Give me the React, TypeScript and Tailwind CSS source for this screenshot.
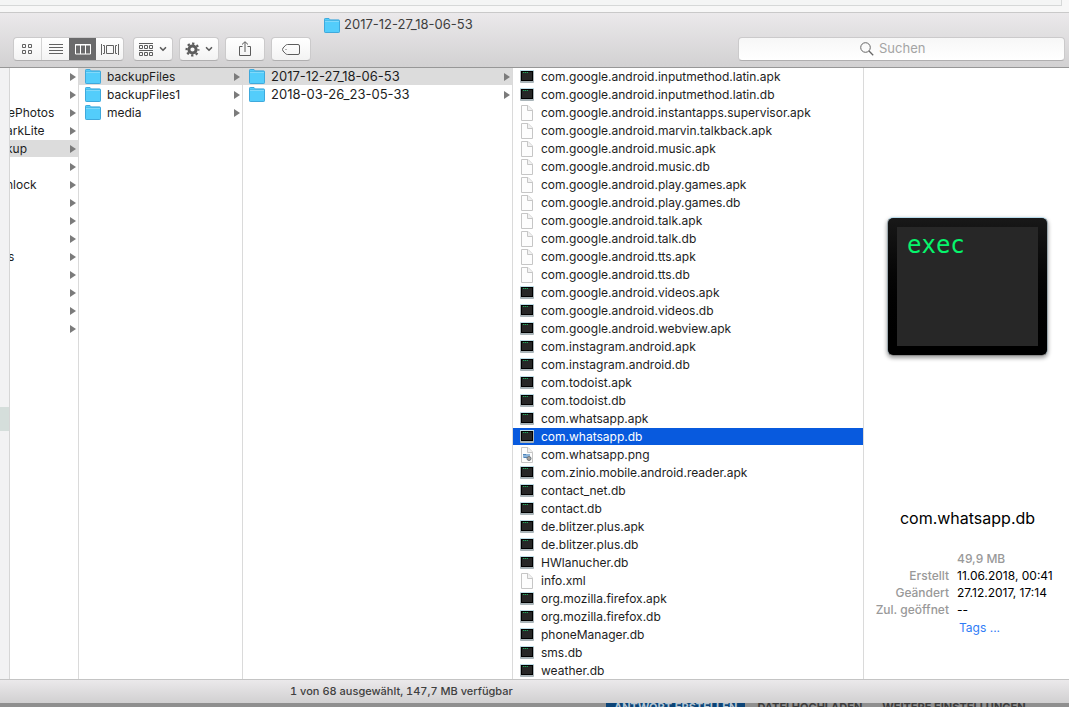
import React from 'react';
import clsx from 'clsx';
import { ChevronDown } from 'lucide-react';

type IconKind = 'exec' | 'doc' | 'image' | 'folder';

interface Item {
  name: string;
  icon?: IconKind;
  selected?: boolean;
  nameClass?: string;
}

const parents: Item[] = [
  { name: '' },
  { name: '' },
  { name: 'ePhotos', nameClass: '-ml-0.5' },
  { name: 'arkLite', nameClass: '-ml-1' },
  { name: 'kup', nameClass: '-ml-1', selected: true },
  { name: '' },
  { name: 'nlock', nameClass: '-ml-1' },
  { name: '' },
  { name: '' },
  { name: '' },
  { name: 's', nameClass: '-ml-0.5' },
  { name: '' },
  { name: '' },
  { name: '' },
  { name: '' }
];

const backups: Item[] = [
  { name: 'backupFiles', icon: 'folder', selected: true },
  { name: 'backupFiles1', icon: 'folder' },
  { name: 'media', icon: 'folder' }
];

const dates: Item[] = [
  { name: '2017-12-27_18-06-53', icon: 'folder', selected: true },
  { name: '2018-03-26_23-05-33', icon: 'folder' }
];

const files: Item[] = [
  { name: 'com.google.android.inputmethod.latin.apk', icon: 'exec' },
  { name: 'com.google.android.inputmethod.latin.db', icon: 'exec' },
  { name: 'com.google.android.instantapps.supervisor.apk', icon: 'doc' },
  { name: 'com.google.android.marvin.talkback.apk', icon: 'doc' },
  { name: 'com.google.android.music.apk', icon: 'doc' },
  { name: 'com.google.android.music.db', icon: 'doc' },
  { name: 'com.google.android.play.games.apk', icon: 'doc' },
  { name: 'com.google.android.play.games.db', icon: 'doc' },
  { name: 'com.google.android.talk.apk', icon: 'doc' },
  { name: 'com.google.android.talk.db', icon: 'doc' },
  { name: 'com.google.android.tts.apk', icon: 'doc' },
  { name: 'com.google.android.tts.db', icon: 'doc' },
  { name: 'com.google.android.videos.apk', icon: 'exec' },
  { name: 'com.google.android.videos.db', icon: 'exec' },
  { name: 'com.google.android.webview.apk', icon: 'exec' },
  { name: 'com.instagram.android.apk', icon: 'exec' },
  { name: 'com.instagram.android.db', icon: 'exec' },
  { name: 'com.todoist.apk', icon: 'exec' },
  { name: 'com.todoist.db', icon: 'exec' },
  { name: 'com.whatsapp.apk', icon: 'exec' },
  { name: 'com.whatsapp.db', icon: 'exec', selected: true },
  { name: 'com.whatsapp.png', icon: 'image' },
  { name: 'com.zinio.mobile.android.reader.apk', icon: 'exec' },
  { name: 'contact_net.db', icon: 'exec' },
  { name: 'contact.db', icon: 'exec' },
  { name: 'de.blitzer.plus.apk', icon: 'exec' },
  { name: 'de.blitzer.plus.db', icon: 'exec' },
  { name: 'HWlanucher.db', icon: 'exec' },
  { name: 'info.xml', icon: 'doc' },
  { name: 'org.mozilla.firefox.apk', icon: 'exec' },
  { name: 'org.mozilla.firefox.db', icon: 'exec' },
  { name: 'phoneManager.db', icon: 'exec' },
  { name: 'sms.db', icon: 'exec' },
  { name: 'weather.db', icon: 'exec' }
];

function FolderIcon() {
  return (
    <svg width="16" height="15" viewBox="0 0 16 15" className="shrink-0">
      <path d="M.5 2V1.2Q.5.5 1.2.5H5l1.3 1.4h8.5q.7 0 .7.7V13.800q0 .7-.7.7H1.200q-.7 0-.7-.7z" fill="#53cdfb" stroke="#3fa9dc" />
      <path d="M1 3.500h14" stroke="#86dcfc" />
      <path d="M1 2.600h14" stroke="#43aede" strokeWidth=".6" />
    </svg>);

}

function ExecIcon() {
  return (
    <svg width="14" height="13" viewBox="0 0 14 13" className="shrink-0">
      <rect width="14" height="13" rx="1" fill="#a9b4b8" />
      <rect width="14" height="1" fill="#bfe0ea" />
      <rect x="1" y="1" width="12" height="10" fill="#000" />
      <rect x="2" y="2" width="10" height="8" fill="#262626" />
      <path d="M3 2.500h1.400m.6 0h1.200m.6 0h1.200" stroke="#1fa35a" />
    </svg>);

}

function DocIcon({ image }: {image?: boolean;}) {
  return (
    <svg width="12" height="16" viewBox="0 0 12 16" className="mx-px shrink-0">
      <path d="M.5.500H7L11.500 5v10.500H.500z" fill="#fdfdfd" stroke="#c6c6c6" />
      <path d="M6.500.500V5.500h5" fill="#f1f1f1" stroke="#c6c6c6" />
      {image &&
      <>
          <rect x="2" y="7" width="7" height="4" fill="#8db4d8" />
          <path d="M2 7.500h3M3 10.500h4" stroke="#4b82b8" />
          <circle cx="8" cy="11.500" r="2" fill="#a9a39c" stroke="#6e7780" />
        </>
      }
    </svg>);

}

function ItemIcon({ kind }: {kind?: IconKind;}) {
  if (kind === 'folder') return <FolderIcon />;
  if (kind === 'exec') return <ExecIcon />;
  if (kind === 'doc') return <DocIcon />;
  if (kind === 'image') return <DocIcon image />;
  return null;
}

interface ColumnProps {
  items: Item[];
  folders?: boolean;
  className: string;
  rowClass: string;
  selectedClass?: string;
}

function Column({
  items,
  folders = false,
  className,
  rowClass,
  selectedClass = 'bg-[#dcdcdc]'
}: ColumnProps) {
  return (
    <ul className={clsx('flex flex-col gap-px overflow-hidden border-r border-[#dadada] bg-white', className)}>
      {items.map((item, i) =>
      <li key={i}>
          <button
          className={clsx('flex h-[17px] w-full items-center text-left leading-[17px] whitespace-nowrap', rowClass, item.selected && selectedClass)}>

            <ItemIcon kind={item.icon} />
            <span className={clsx('flex-1', item.nameClass)}>{item.name}</span>
            {folders &&
          <svg width="6" height="8" viewBox="0 0 6 8" className="mr-0.5 shrink-0">
                <path d="M0 0L6 4L0 8z" fill="#7b7b7b" />
              </svg>
          }
          </button>
        </li>
      )}
    </ul>);

}

function ToolButton({ children, label }: {children: React.ReactNode;label: string;}) {
  return (
    <button
      aria-label={label}
      className="flex h-6 w-10 items-center justify-center gap-1 rounded border border-[#cbcacb] border-b-[#b0afb0] bg-linear-to-b from-white to-[#f3f3f3] text-[#5c5c5c]">

      {children}
    </button>);

}

function ViewSwitcher() {
  return (
    <div className="flex h-6 overflow-hidden rounded border border-[#cbcacb] border-b-[#b0afb0] bg-linear-to-b from-white to-[#f3f3f3] text-[#626262]">
      <button aria-label="Symbole" className="flex w-7 items-center justify-center border-r border-[#d4d4d4]">
        <svg width="11" height="11" viewBox="0 0 11 11" fill="none" stroke="currentColor">
          <path d="M.5.500h3v3h-3zM6.500.500h3v3h-3zM.500 6.500h3v3h-3zM6.500 6.500h3v3h-3z" />
        </svg>
      </button>
      <button aria-label="Liste" className="flex w-[27px] items-center justify-center">
        <svg width="14" height="11" viewBox="0 0 14 11" stroke="currentColor">
          <path d="M0 .500h14M0 3.500h14M0 6.500h14M0 9.500h14" />
        </svg>
      </button>
      <button aria-label="Spalten" className="flex w-[27px] items-center justify-center bg-[#6a6a6b] text-white">
        <svg width="16" height="11" viewBox="0 0 16 11" fill="none" stroke="currentColor">
          <path d="M.5.500h15v9.500H.500zM5.500.500V10M10.500.500V10" />
          <path d="M0 1h16" />
        </svg>
      </button>
      <button aria-label="Cover Flow" className="flex w-[27px] items-center justify-center">
        <svg width="18" height="11" viewBox="0 0 18 11" fill="none" stroke="currentColor">
          <path d="M.5 0v11M17.500 0v11M2 1.500h1.500v8H2M16 1.500h-1.500v8H16M5.500 1.500h7v8h-7z" />
        </svg>
      </button>
    </div>);

}

function Toolbar() {
  return (
    <header className="border-t border-b border-t-[#c9c9c9] border-b-[#979797] bg-linear-to-b from-[#ebe9eb] to-[#d2d1d2] pb-1.5">
      <div className="flex h-6 items-center gap-1 pl-[324px] text-[13px] text-[#3e3e3e]">
        <FolderIcon />
        <span>2017-12-27_18-06-53</span>
      </div>
      <div className="flex items-center gap-1.5 pr-1 pl-[13px]">
        <div className="mr-[3px]">
          <ViewSwitcher />
        </div>
        <ToolButton label="Gruppieren">
          <svg width="15" height="13" viewBox="0 0 15 13" fill="none" stroke="currentColor">
            <path d="M0 .500h14M0 7.500h14" />
            <path d="M.5 2.500h3v3h-3zM5.500 2.500h3v3h-3zM10.500 2.500h3v3h-3zM.5 9.500h3v3h-3zM5.500 9.500h3v3h-3zM10.500 9.500h3v3h-3z" />
          </svg>
          <ChevronDown className="h-2.5 w-2.5" strokeWidth={4} />
        </ToolButton>
        <ToolButton label="Aktionen">
          <svg width="15" height="15" viewBox="-7.500 -7.500 15 15" fill="none" stroke="currentColor">
            <circle r="3.600" strokeWidth="3" />
            <circle r="5.900" strokeWidth="2.200" strokeDasharray="2.317 2.317" strokeDashoffset="1.150" />
          </svg>
          <ChevronDown className="h-2.5 w-2.5" strokeWidth={4} />
        </ToolButton>
        <ToolButton label="Teilen">
          <svg width="12" height="16" viewBox="0 0 12 16" fill="none" stroke="currentColor">
            <path d="M3.500 5.500H.500v9h11v-9h-3M6 11V1M3 3.500L6 .700l3 2.800" />
          </svg>
        </ToolButton>
        <ToolButton label="Tags">
          <svg width="18" height="11" viewBox="0 0 18 11" fill="none" stroke="currentColor">
            <path d="M5.500.500h10.500q1.500 0 1.500 1.500v7q0 1.500-1.500 1.500H5.500Q4.500 10.500 3.700 9.800L1 7Q0 5.500 1 4L3.700 1.200Q4.500.500 5.500.500z" />
            <circle cx="4" cy="5.500" r=".6" fill="currentColor" stroke="none" />
          </svg>
        </ToolButton>
        <label className="ml-auto flex h-6 w-[327px] items-center justify-center gap-[5px] rounded border border-[#cbcacb] border-b-[#b0afb0] bg-linear-to-b from-[#f7f7f7] to-white">
          <svg width="14" height="14" viewBox="0 0 14 14" fill="none" stroke="#666">
            <circle cx="5.500" cy="5.500" r="4.800" />
            <path d="M9 9l4.200 4.200" strokeWidth="1.300" />
          </svg>
          <input
            type="text"
            aria-label="Suchen"
            placeholder="Suchen"
            className="w-16 bg-transparent text-[13px] outline-none placeholder:text-[#a4a4a4]" />

        </label>
      </div>
    </header>);

}

function Preview() {
  return (
    <section className="flex w-[205px] shrink-0 flex-col items-center bg-white pt-[149px] pl-0.5">
      <div className="h-[139px] w-[161px] rounded-md border border-t-[#b9dcec] border-r-[#9aa7ad] border-b-[#8b8b8b] border-l-[#9aa7ad] bg-linear-to-b from-[#181818] to-black px-[9px] pt-[9px] pb-[9px] shadow-[0_2px_4px_rgba(0,0,0,0.4)]">
        <div className="h-full bg-[#272727] px-2.5 pt-0.5 font-['DejaVu_Sans_Mono',monospace] text-2xl leading-8 text-[#06f56c]">
          exec
        </div>
      </div>
      <h2 className="mt-[150px] text-base leading-6 text-black">com.whatsapp.db</h2>
      <dl className="mt-5 grid w-full grid-cols-[83px_1fr] gap-x-2 text-xs leading-[17px] whitespace-nowrap text-black">
        <dt />
        <dd className="font-medium text-[#999]">49,9 MB</dd>
        <dt className="text-right font-medium text-[#999]">Erstellt</dt>
        <dd>11.06.2018, 00:41</dd>
        <dt className="text-right font-medium text-[#999]">Geändert</dt>
        <dd>27.12.2017, 17:14</dd>
        <dt className="text-right font-medium text-[#999]">Zul. geöffnet</dt>
        <dd>--</dd>
        <dt />
        <dd className="pt-px pl-0.5">
          <a href="#tags" className="text-[#2f7cf6]">Tags ...</a>
        </dd>
      </dl>
    </section>);

}

export default function App() {
  return (
    <div className="flex min-h-screen flex-col overflow-hidden bg-[#f7f7f7] font-[Inter,'Liberation_Sans',sans-serif] text-[#1d1d1d]">
      <div className="h-3 pr-[7px]">
        <div className="h-1.5 border-r border-b border-[#d6d8d8] bg-[#f4f5f5]" />
      </div>
      <Toolbar />
      <main className="flex flex-1">
        <aside className="flex w-2.5 shrink-0 flex-col border-r border-[#d6d6d6] bg-[#f2f2f3] pt-[339px]">
          <div className="h-6 bg-[#d5dedb]" />
        </aside>
        <Column items={parents} folders className="w-[69px] shrink-0" rowClass="text-xs" />
        <Column items={backups} folders className="w-[164px] shrink-0" rowClass="gap-1.5 pl-1.5 text-xs" />
        <Column items={dates} folders className="w-[270px] shrink-0" rowClass="gap-1.5 pl-1.5 text-[13px]" />
        <Column items={files} className="min-w-0 flex-1" rowClass="gap-[7px] pl-[7px] text-xs" selectedClass="bg-[#085ade] text-white" />
        <Preview />
      </main>
      <footer className="h-6 border-t border-[#c4c4c4] bg-linear-to-b from-[#ebe9eb] to-[#d1d0d1] pl-[290px] text-[11px] leading-[23px] font-medium text-[#3f3f3f] tabular-nums">
        1 von 68 ausgewählt, 147,7 MB verfügbar
      </footer>
      <nav className="flex h-1 items-start overflow-hidden bg-[#8f8f8f] pl-[606px] text-[11px] leading-2 font-bold whitespace-nowrap text-[#3c3c3c]">
        <a href="#antwort" className="bg-[#0c4477] px-2 text-[#b4c4d2]">ANTWORT ERSTELLEN</a>
        <a href="#datei" className="px-3">DATEI HOCHLADEN</a>
        <a href="#weitere" className="px-2">WEITERE EINSTELLUNGEN</a>
      </nav>
    </div>);

}
